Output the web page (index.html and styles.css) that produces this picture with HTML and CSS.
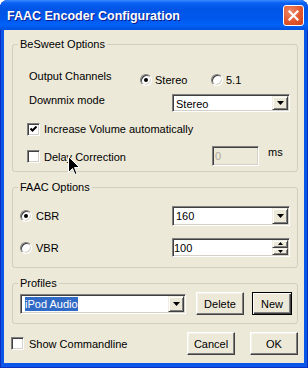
FILE: index.html
```html
<!DOCTYPE html>
<html lang="en">
<head>
    <meta charset="UTF-8">
    <title>FAAC Encoder Configuration</title>
    <link rel="stylesheet" href="styles.css">
</head>
<body>

<div class="window">
    <div class="titlebar">
        <span class="title">FAAC Encoder Configuration</span>
        <span class="close">
            <svg width="11" height="11" viewBox="0 0 11 11"><path d="M1.5 1.5 L9.5 9.5 M9.5 1.5 L1.5 9.5" stroke="#fff" stroke-width="2.2" stroke-linecap="square"/></svg>
        </span>
    </div>

    <div class="client">
        <div class="group besweet">
            <div class="group-title">BeSweet Options</div>
            <div class="row channels">
                <span class="label">Output Channels</span>
                <span class="opt stereo"><span class="radio on"></span>Stereo</span>
                <span class="opt"><span class="radio"></span>5.1</span>
            </div>
            <div class="row downmix">
                <span class="label">Downmix mode</span>
                <div class="combo small">
                    <span class="combo-text">Stereo</span>
                    <span class="drop"><svg width="7" height="4" viewBox="0 0 7 4"><polygon points="0,0 7,0 3.5,4" fill="#000"/></svg></span>
                </div>
            </div>
            <div class="row check-row">
                <span class="check"><svg width="7" height="7" viewBox="0 0 7 7"><path d="M0.5 2.5 L2.5 4.5 L6.5 0.5" stroke="#000" stroke-width="2" fill="none"/></svg></span>
                <span>Increase Volume automatically</span>
            </div>
            <div class="row delay">
                <span class="check"></span>
                <span class="delay-text">Delay Correction</span>
                <span class="field disabled">0</span>
                <span class="unit">ms</span>
            </div>
        </div>

        <div class="group faac">
            <div class="group-title">FAAC Options</div>
            <div class="row faac-row cbr">
                <span class="opt wide"><span class="radio on"></span>CBR</span>
                <div class="combo">
                    <span class="combo-text">160</span>
                    <span class="drop"><svg width="7" height="4" viewBox="0 0 7 4"><polygon points="0,0 7,0 3.5,4" fill="#000"/></svg></span>
                </div>
            </div>
            <div class="row faac-row vbr">
                <span class="opt wide"><span class="radio"></span>VBR</span>
                <div class="combo spin-field">
                    <span class="combo-text">100</span>
                    <span class="spin">
                        <span class="spin-btn"><svg width="5" height="3" viewBox="0 0 5 3"><polygon points="2.5,0 5,3 0,3" fill="#000"/></svg></span>
                        <span class="spin-btn"><svg width="5" height="3" viewBox="0 0 5 3"><polygon points="0,0 5,0 2.5,3" fill="#000"/></svg></span>
                    </span>
                </div>
            </div>
        </div>

        <div class="group profiles">
            <div class="group-title">Profiles</div>
            <div class="row profile-row">
                <div class="combo profile">
                    <span class="combo-text"><span class="selected">iPod Audio</span></span>
                    <span class="drop"><svg width="7" height="4" viewBox="0 0 7 4"><polygon points="0,0 7,0 3.5,4" fill="#000"/></svg></span>
                </div>
                <span class="btn delete">Delete</span>
                <span class="btn new default">New</span>
            </div>
        </div>

        <div class="row bottom">
            <span class="check"></span>
            <span class="show-text">Show Commandline</span>
            <span class="btn cancel">Cancel</span>
            <span class="btn ok">OK</span>
        </div>
    </div>

    <svg class="cursor" width="12" height="20" viewBox="0 0 12 20">
        <path d="M0.5 0.5 L0.5 16.5 L4.5 12.5 L7 18.5 L9 17.5 L6.5 11.5 L11.5 11.5 Z" fill="#000" stroke="#fff" stroke-width="1"/>
    </svg>
</div>

</body>
</html>
```

FILE: styles.css
```css
/* XP style dialog, classic controls */
body { margin: 0; background: #fff; font-family: "Liberation Sans", Arial, sans-serif; font-size: 11px; color: #000; }

.window { position: relative; width: 308px; height: 368px; display: flex; flex-direction: column; background: #0A56E6; border-radius: 8px 8px 0 0; box-shadow: inset 1px 0 #0B2FC0, inset -1px 0 #0B2FC0, inset 0 -1px #0B2FC0; }

.titlebar { height: 30px; display: flex; align-items: center; padding-left: 7px; border-radius: 8px 8px 0 0;
    background: linear-gradient(#3A8CFF 0, #0A61F3 3px, #0055E5 9px, #0057EC 18px, #0062F8 25px, #0050DD 30px); }
.title { font-weight: bold; font-size: 12.5px; line-height: 16px; margin-top: 2px; color: #fff; text-shadow: 1px 1px #0D1A8A; }
.close { margin-left: auto; margin-right: 4px; width: 21px; height: 21px; box-sizing: border-box; border: 1px solid #fff; border-radius: 3px;
    background: radial-gradient(circle at 35% 30%, #EE8A68 0, #E2582E 55%, #C9401B 100%); display: flex; align-items: center; justify-content: center; }

.client { flex: 1; margin: 0 4px 5px; padding: 14px 6px 8px 8px; background: #ECE9D8; display: flex; flex-direction: column; }

.group { border: 1px solid #D0D0BF; border-radius: 3px; }
.group + .group { margin-top: 15px; }
.group-title { width: fit-content; margin: -8px 0 0 5px; padding: 0 2px; line-height: 14px; background: #ECE9D8; }

.row { display: flex; }

/* BeSweet */
.besweet { padding-bottom: 5px; }
.channels { margin-top: 17px; padding-left: 16px; height: 20px; }
.channels .label { width: 111px; line-height: 16px; }
.opt { display: flex; align-items: center; gap: 3px; line-height: 16px; height: 16px; }
.channels .opt { padding-top: 4px; }
.stereo { width: 71px; }

.downmix { margin-top: 6px; padding-left: 16px; }
.downmix .label { width: 143px; line-height: 13px; }

.check-row { margin-top: 9px; padding-left: 14px; align-items: center; height: 16px; line-height: 16px; gap: 4px; }
.delay { margin-top: 9px; padding-left: 14px; align-items: center; height: 20px; }
.delay-text { margin-left: 4px; width: 168px; line-height: 16px; margin-top: 2px; }
.unit { margin-left: 9px; align-self: flex-start; line-height: 13px; }

/* sunken controls */
.combo, .field, .check { box-sizing: border-box; background: #fff; border: 1px solid; border-color: #808080 #fff #fff #808080;
    box-shadow: inset 1px 1px #404040, inset -1px -1px #D4D0C8; }
.combo { display: flex; width: 118px; height: 20px; padding: 1px; }
.combo.small { height: 18px; }
.combo-text { flex: 1; padding: 1px 0 0 2px; line-height: 14px; }
.drop, .spin-btn { box-sizing: border-box; background: #ECE9D8; border: 1px solid; border-color: #F1EFE2 #404040 #404040 #F1EFE2;
    box-shadow: inset 1px 1px #fff, inset -1px -1px #808080; display: flex; align-items: center; justify-content: center; }
.drop { width: 16px; }

.field { width: 47px; height: 20px; padding: 2px 0 0 2px; line-height: 14px; }
.field.disabled { background: #ECE9D8; color: #ACA899; }

.check { width: 13px; height: 13px; display: flex; align-items: center; justify-content: center; }

.radio { box-sizing: border-box; width: 12px; height: 12px; border-radius: 50%; background: #fff; border: 1px solid; border-color: #808080 #fff #fff #808080;
    box-shadow: inset 1px 1px #404040, inset -1px -1px #D4D0C8; display: flex; align-items: center; justify-content: center; }
.radio.on::after { content: ""; width: 4px; height: 4px; border-radius: 50%; background: #000; }

/* FAAC */
.faac { padding-bottom: 10px; }
.faac-row { padding-left: 7px; align-items: center; }
.faac-row .opt { width: 152px; gap: 4px; }
.cbr { margin-top: 12px; height: 20px; }
.vbr { margin-top: 12px; height: 19px; }
.vbr .combo { height: 19px; }
.vbr .combo-text { padding-left: 0; }
.spin { display: flex; flex-direction: column; width: 16px; }
.spin-btn { flex: 1; }

/* Profiles */
.profiles { padding-bottom: 8px; }
.profile-row { margin-top: 2px; height: 23px; align-items: center; padding-left: 7px; }
.combo.profile { width: 166px; }
.profile .combo-text { padding-left: 3px; }
.selected { background: #316AC5; color: #fff; padding: 1px 0; }

.btn { box-sizing: border-box; width: 48px; height: 23px; background: #ECE9D8; border: 1px solid; border-color: #fff #404040 #404040 #fff;
    box-shadow: inset -1px -1px #808080, inset 1px 1px #F4F3EC; display: flex; align-items: center; justify-content: center; }
.btn.default { border-color: #000; box-shadow: inset 1px 1px #fff, inset -1px -1px #404040, inset -2px -2px #808080; }
.delete { margin-left: 10px; }
.new { margin-left: 8px; width: 40px; }

/* bottom */
.bottom { margin-top: 8px; height: 23px; align-items: center; }
.bottom .check { margin-left: -1px; }
.show-text { margin-left: 5px; }
.cancel { margin-left: auto; }
.ok { margin-left: 15px; }

.cursor { position: absolute; left: 68px; top: 156px; }
```
